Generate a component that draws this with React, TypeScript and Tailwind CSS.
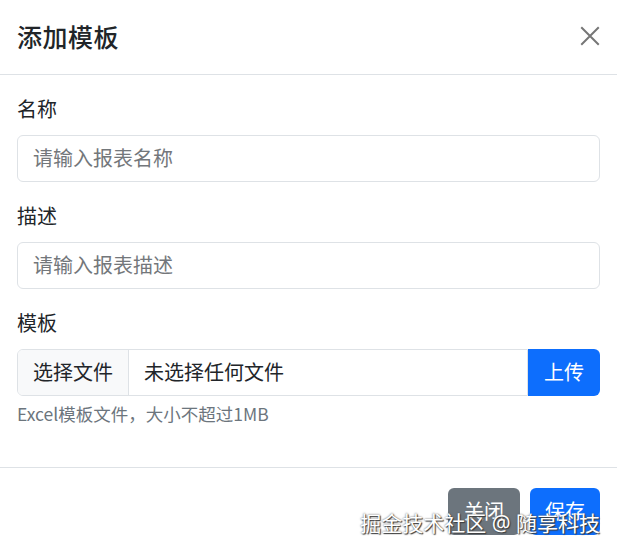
import React from 'react';

const font = "font-['Noto_Sans','Noto_Sans_CJK_SC',sans-serif]";

export default function App() {
  return (
    <div className={`relative w-[617px] h-[552px] overflow-hidden bg-white text-[#212529] ${font}`}>
      {/* Header */}
      <div className="h-[75px] px-[17px] flex items-center justify-between border-b border-[#dee2e6]">
        <h5 className="text-[25px] font-medium leading-[1.2] tracking-[0.5px]">添加模板</h5>
        <button className="w-[20px] h-[20px] mb-[3px]" aria-label="关闭">
          <svg viewBox="0 0 16 16" width="20" height="20" fill="none" stroke="#767676" strokeWidth="1.6">
            <path d="M1 1l14 14M15 1L1 15" />
          </svg>
        </button>
      </div>

      {/* Body */}
      <div className="px-[17px] pt-[20px] pb-[20px]">
        <div className="mb-[20px]">
          <label className="block text-[20px] leading-[30px] mb-[10px]">名称</label>
          <input
            className="w-full h-[47px] px-[15px] border border-[#dee2e6] rounded-[6px] text-[20px] placeholder:text-[#73777b] outline-none"
            placeholder="请输入报表名称"
          />
        </div>
        <div className="mb-[20px]">
          <label className="block text-[20px] leading-[30px] mb-[10px]">描述</label>
          <input
            className="w-full h-[47px] px-[15px] border border-[#dee2e6] rounded-[6px] text-[20px] placeholder:text-[#73777b] outline-none"
            placeholder="请输入报表描述"
          />
        </div>
        <div className="mb-[20px]">
          <label className="block text-[20px] leading-[30px] mb-[10px]">模板</label>
          <div className="flex h-[47px]">
            <div className="flex flex-1 items-center border border-[#dee2e6] rounded-l-[6px] overflow-hidden text-[20px]">
              <span className="h-full flex items-center px-[15px] bg-[#f8f9fa] border-r border-[#dee2e6]">选择文件</span>
              <span className="px-[15px]">未选择任何文件</span>
            </div>
            <button className="w-[72px] h-full bg-[#0d6efd] text-white text-[20px] rounded-r-[6px]">上传</button>
          </div>
          <div className="mt-[5px] text-[17.5px] leading-[26px] text-[#6c757d] font-['Noto_Sans_CJK_SC',sans-serif]">Excel模板文件，大小不超过1MB</div>
        </div>
      </div>

      {/* Footer */}
      <div className="border-t border-[#dee2e6] pt-[20px] px-[17px] flex justify-end gap-[10px]">
        <button className="w-[72px] h-[47px] rounded-[6px] bg-[#6c757d] text-white text-[20px]">关闭</button>
        <button className="w-[70px] h-[47px] rounded-[6px] bg-[#0d6efd] text-white text-[20px]">保存</button>
      </div>

      {/* Watermark */}
      <div className="absolute top-[513px] right-[17px] text-[21px] leading-none text-white [text-shadow:1px_1px_1px_#3a3a3a,0_0_2px_#555]">
        掘金技术社区 @ 随享科技
      </div>
    </div>
  );
}
